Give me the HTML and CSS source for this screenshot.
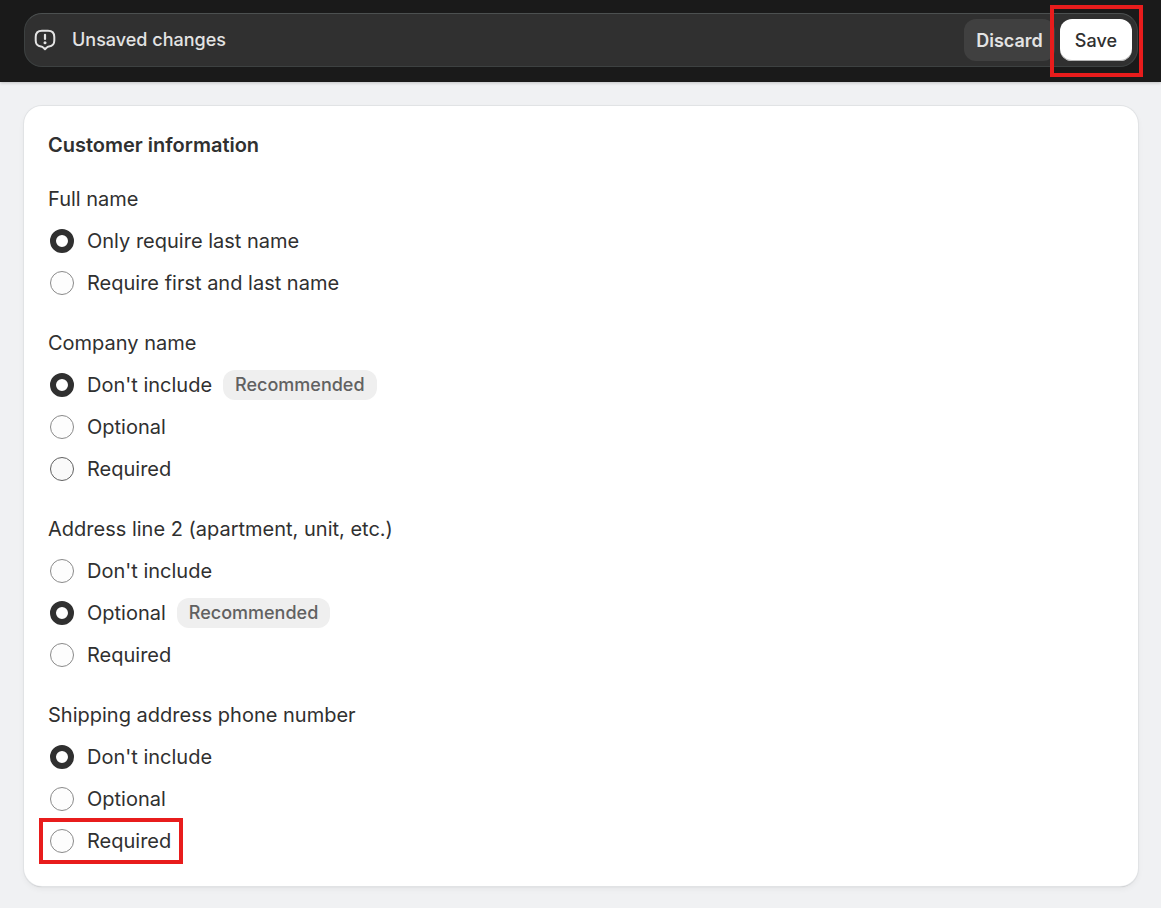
FILE: index.html
```html
<!DOCTYPE html>
<html lang="en">
<head>
	<meta charset="UTF-8">
	<title>Customer information</title>
	<link rel="stylesheet" href="styles.css">
</head>
<body>
	<header class="topbar">
		<div class="savebar">
			<svg class="savebar-icon" viewBox="0 0 22 22" fill="none" stroke="currentColor" stroke-width="2" stroke-linecap="round" stroke-linejoin="round">
				<path d="M8 1.800h6q6.300 0 6.300 6.200v3.500q0 5.500-5.300 6-1.500.2-2.500 1.300L11 20.300l-1.500-1.500Q8.500 17.700 7 17.500q-5.300-.5-5.300-6V8Q1.700 1.800 8 1.800z"/>
				<path d="M11 5.800v4.200" stroke-width="2.200"/>
				<circle cx="11" cy="13.700" r="1.500" fill="currentColor" stroke="none"/>
			</svg>
			<p class="savebar-text">Unsaved changes</p>
			<button type="button" class="btn btn-dark">Discard</button>
			<div class="marked marked-save">
				<button type="button" class="btn btn-light">Save</button>
			</div>
		</div>
	</header>
	<main class="card">
		<h1>Customer information</h1>
		<form class="groups">
			<fieldset>
				<legend>Full name</legend>
				<div class="row"><label><input type="radio" name="full-name" checked>Only require last name</label></div>
				<div class="row"><label><input type="radio" name="full-name">Require first and last name</label></div>
			</fieldset>
			<fieldset>
				<legend>Company name</legend>
				<div class="row"><label><input type="radio" name="company" checked>Don't include</label><span class="badge">Recommended</span></div>
				<div class="row"><label><input type="radio" name="company">Optional</label></div>
				<div class="row"><label><input type="radio" name="company" class="hovered">Required</label></div>
			</fieldset>
			<fieldset>
				<legend>Address line 2 (apartment, unit, etc.)</legend>
				<div class="row"><label><input type="radio" name="address">Don't include</label></div>
				<div class="row"><label><input type="radio" name="address" checked>Optional</label><span class="badge">Recommended</span></div>
				<div class="row"><label><input type="radio" name="address">Required</label></div>
			</fieldset>
			<fieldset>
				<legend>Shipping address phone number</legend>
				<div class="row"><label><input type="radio" name="phone" checked>Don't include</label></div>
				<div class="row"><label><input type="radio" name="phone">Optional</label></div>
				<div class="row"><label class="marked marked-option"><input type="radio" name="phone">Required</label></div>
			</fieldset>
		</form>
	</main>
</body>
</html>
```

FILE: styles.css
```css
* {
	box-sizing: border-box;
	padding: 0;
	margin: 0;
}
body {
	font-family: Inter, "Liberation Sans", sans-serif;
	font-size: 20px;
	line-height: 30px;
	color: #303030;
	background-color: #f0f1f3;
}
.topbar {
	padding: 13px 23px 15px 24px;
	background-color: #1a1a1a;
	box-shadow: 0 1px 3px rgba(0, 0, 0, 0.2);
}
.savebar {
	display: flex;
	align-items: center;
	height: 54px;
	padding: 0 5px 0 9px;
	border: 1px solid #3d4141;
	border-top-color: #4c5050;
	border-radius: 18px;
	background-color: #303030;
	color: #e3e3e3;
}
.savebar-icon {
	width: 22px;
	height: 22px;
}
.savebar-text {
	flex: 1;
	margin-left: 16px;
	font-size: 18px;
	font-weight: 500;
}
.btn {
	height: 42px;
	border: none;
	border-radius: 12px;
	font-family: inherit;
	font-size: 18px;
	cursor: pointer;
}
.btn-dark {
	padding: 0 12px;
	margin-right: 5px;
	font-weight: 600;
	color: #e3e3e3;
	background-color: #404040;
}
.btn-light {
	padding: 0 15px;
	font-weight: 500;
	color: #303030;
	background-color: #fff;
	box-shadow: inset 0 -1px 0 #b5b5b5;
}

/* red frames drawn around the controls to click */
.marked {
	position: relative;
}
.marked::after {
	content: "";
	position: absolute;
	border: 4px solid #e81c1c;
	pointer-events: none;
}
.marked-save {
	display: flex;
}
.marked-save::after {
	inset: -14px -11px -16px -10px;
}
.marked-option::after {
	inset: -8px -12px -8px -9px;
}

.card {
	padding: 24px 24px 30px;
	margin: 24px 23px 22px 24px;
	border-radius: 18px;
	background-color: #fff;
	box-shadow: 0 0 0 1px #e1e3e5, 0 1px 1px #b4b6b8, 0 3px 6px rgba(0, 0, 0, 0.05);
}
h1 {
	margin-bottom: 24px;
	font-size: 20px;
	font-weight: 600;
}
.groups {
	display: flex;
	flex-direction: column;
	gap: 30px;
}
fieldset {
	border: none;
}
.row {
	display: flex;
	align-items: center;
	gap: 11px;
	margin-top: 12px;
}
.row label {
	display: flex;
	align-items: center;
	gap: 13px;
	padding-left: 2px;
}
input[type="radio"] {
	appearance: none;
	width: 24px;
	height: 24px;
	border: 1px solid #8a8a8a;
	border-radius: 50%;
	background-color: #fdfdfd;
}
input[type="radio"].hovered {
	border-color: #616161;
	background-color: #fafafa;
}
input[type="radio"]:checked {
	border: 6px solid #303030;
	background-color: #fff;
}
.badge {
	padding: 0 12px;
	border-radius: 12px;
	font-size: 18px;
	font-weight: 500;
	color: #616161;
	background-color: #efefef;
}
```
